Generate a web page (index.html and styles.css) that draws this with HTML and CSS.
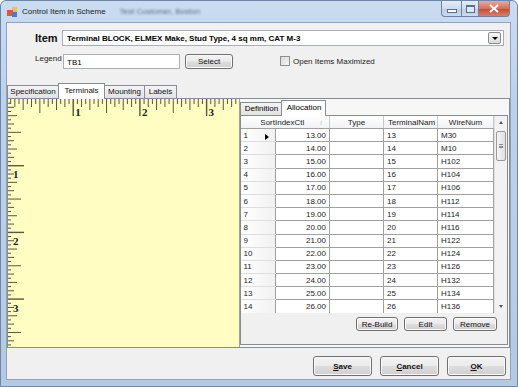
FILE: index.html
```html
<!DOCTYPE html>
<html lang="en">
<head>
  <meta charset="UTF-8" />
  <title>Control Item in Scheme</title>
  <link rel="stylesheet" href="styles.css">
</head>
<body>
  <div class="window">
    <div class="titlebar">
      <svg class="app-icon" width="11" height="11" viewBox="0 0 11 11">
        <rect x="5" y="0" width="5" height="5" fill="#f2c33a"/>
        <rect x="0" y="3" width="6" height="6" fill="#e2572c"/>
        <rect x="5" y="5" width="5" height="5" fill="#3f7fd0"/>
      </svg>
      <span class="title">Control Item in Scheme</span>
      <span class="title-blur">Test Customer, Boston</span>
      <div class="caption-btns">
        <div class="cap cap-min"><span class="dash"></span></div>
        <div class="cap cap-max"><span class="square"></span></div>
        <div class="cap cap-close">
          <svg width="10" height="9" viewBox="0 0 10 9">
            <path d="M1 1 L9 8 M9 1 L1 8" stroke="#fff" stroke-width="2"/>
          </svg>
        </div>
      </div>
    </div>

    <div class="client">
      <div class="item-row">
        <span class="item-label">Item</span>
        <div class="combo">
          <span class="combo-text">Terminal BLOCK, ELMEX Make, Stud Type, 4 sq mm, CAT M-3</span>
          <div class="combo-btn"><span class="arrow-down"></span></div>
        </div>
      </div>

      <div class="legend-row">
        <span class="legend-label">Legend</span>
        <div class="textbox">TB1</div>
        <button class="btn select-btn">Select</button>
        <label class="check"><span class="check-box"></span>Open Items Maximized</label>
      </div>

      <div class="tabs">
        <div class="tab tab-spec">Specification</div>
        <div class="tab tab-term active">Terminals</div>
        <div class="tab tab-mount">Mounting</div>
        <div class="tab tab-labels">Labels</div>
      </div>

      <div class="tab-page">
        <div class="ruler-area">
          <svg id="ruler" width="233" height="248"></svg>
        </div>
        <div class="side">
          <div class="subtabs">
            <div class="subtab sub-def">Definition</div>
            <div class="subtab sub-alloc active">Allocation</div>
          </div>
          <div class="sub-page">
            <div class="grid-wrap">
              <table class="grid">
                <colgroup>
                  <col class="c-head"><col class="c-sort"><col class="c-type"><col class="c-term"><col class="c-wire">
                </colgroup>
                <thead>
                  <tr>
                    <th colspan="2" class="h-sort">SortIndexCtl<span class="sort-mark">/</span></th>
                    <th>Type</th>
                    <th class="h-left">TerminalNam</th>
                    <th>WireNum</th>
                  </tr>
                </thead>
                <tbody id="grid-body"></tbody>
              </table>
              <div class="vscroll">
                <div class="sb-btn"><span class="sb-up"></span></div>
                <div class="sb-thumb"><span class="grip"></span></div>
                <div class="sb-track"></div>
                <div class="sb-btn"><span class="sb-down"></span></div>
              </div>
            </div>
            <div class="grid-actions">
              <button class="btn act-rebuild">Re-Build</button>
              <button class="btn act-edit">Edit</button>
              <button class="btn act-remove">Remove</button>
            </div>
          </div>
        </div>
      </div>

      <div class="footer">
        <button class="btn big-btn"><u>S</u>ave</button>
        <button class="btn big-btn"><u>C</u>ancel</button>
        <button class="btn big-btn"><u>O</u>K</button>
      </div>
    </div>
  </div>

  <script>
    const rows = [
      ['1', '13.00', '13', 'M30'],
      ['2', '14.00', '14', 'M10'],
      ['3', '15.00', '15', 'H102'],
      ['4', '16.00', '16', 'H104'],
      ['5', '17.00', '17', 'H106'],
      ['6', '18.00', '18', 'H112'],
      ['7', '19.00', '19', 'H114'],
      ['8', '20.00', '20', 'H116'],
      ['9', '21.00', '21', 'H122'],
      ['10', '22.00', '22', 'H124'],
      ['11', '23.00', '23', 'H126'],
      ['12', '24.00', '24', 'H132'],
      ['13', '25.00', '25', 'H134'],
      ['14', '26.00', '26', 'H136']
    ];

    const body = document.getElementById('grid-body');
    rows.forEach((r, i) => {
      const tr = document.createElement('tr');
      const marker = i === 0 ? '<span class="row-marker"></span>' : '';
      tr.innerHTML =
        '<td class="rowhead">' + r[0] + marker + '</td>' +
        '<td class="num">' + r[1] + '</td>' +
        '<td></td>' +
        '<td>' + r[2] + '</td>' +
        '<td>' + r[3] + '</td>';
      body.appendChild(tr);
    });

    // ruler: 16 ticks per inch, both edges
    const svg = document.getElementById('ruler');
    const NS = 'http://www.w3.org/2000/svg';
    const PPI = 66.7, X0 = -1.5, Y0 = 0;

    function line(x1, y1, x2, y2, w) {
      const l = document.createElementNS(NS, 'line');
      l.setAttribute('x1', x1); l.setAttribute('y1', y1);
      l.setAttribute('x2', x2); l.setAttribute('y2', y2);
      l.setAttribute('stroke', '#58583a');
      l.setAttribute('stroke-width', w);
      svg.appendChild(l);
    }
    function label(x, y, t) {
      const el = document.createElementNS(NS, 'text');
      el.setAttribute('x', x); el.setAttribute('y', y);
      el.setAttribute('class', 'ruler-num');
      el.textContent = t;
      svg.appendChild(el);
    }
    function len(i, lens) {
      if (i % 16 === 0) return lens[0];
      if (i % 8 === 0) return lens[1];
      if (i % 4 === 0) return lens[2];
      if (i % 2 === 0) return lens[3];
      return lens[4];
    }

    for (let i = 1; X0 + i * PPI / 16 < 233; i++) {
      const x = X0 + i * PPI / 16;
      line(x, 0, x, len(i, [17, 14, 11, 8, 5]), i % 16 === 0 ? 1.4 : 1);
      if (i % 16 === 0) label(x + 2, 17, i / 16);
    }
    for (let i = 1; Y0 + i * PPI / 16 < 248; i++) {
      const y = Y0 + i * PPI / 16;
      line(-1, y, len(i, [17, 14, 10, 7, 4]) - 1, y, i % 16 === 0 ? 1.4 : 1);
      if (i % 16 === 0) label(5, y + 12.5, i / 16);
    }
  </script>
</body>
</html>
```

FILE: styles.css
```css
body {
  margin: 0;
  font-family: "Liberation Sans", Arial, sans-serif;
  font-size: 8px;
  color: #000;
  background: #ffffff;
}
.window {
  width: 518px;
  height: 387px;
  box-sizing: border-box;
  display: flex;
  flex-direction: column;
  padding: 0 6px 6px 5px;
  background: linear-gradient(180deg, #cadcf0 0%, #bdd2ea 25%, #b4cae3 100%);
  border: 1px solid #6f87a6;
  border-radius: 6px 6px 0 0;
}
.titlebar {
  height: 21px;
  display: flex;
  align-items: center;
}
.app-icon {
  margin-left: 1px;
  margin-top: 1px;
}
.title {
  margin-left: 4px;
  font-size: 8px;
  color: #1a1a1a;
}
.title-blur {
  margin-left: 14px;
  font-size: 8px;
  color: #5b6c83;
  filter: blur(1.3px);
}
.caption-btns {
  margin-left: auto;
  margin-right: 1px;
  align-self: flex-start;
  display: flex;
}
.cap {
  height: 16px;
  box-sizing: border-box;
  border: 1px solid #6d83a1;
  border-top: none;
  display: flex;
  align-items: center;
  justify-content: center;
  background: linear-gradient(180deg, #e4edf7 0%, #cddcee 50%, #b9cde5 51%, #c9dbef 100%);
}
.cap-min {
  width: 20px;
  border-radius: 0 0 0 4px;
  border-right: none;
}
.cap-max {
  width: 18px;
}
.cap-close {
  width: 31px;
  border-left: none;
  border-radius: 0 0 4px 0;
  background: linear-gradient(180deg, #e9a99b 0%, #d66f5c 50%, #c64a32 51%, #d5806c 100%);
}
.dash {
  width: 8px;
  height: 2px;
  margin-top: 4px;
  background: #fff;
  border: 1px solid #5b6f89;
}
.square {
  width: 7px;
  height: 5px;
  border: 1px solid #5b6f89;
  border-top-width: 2px;
  background: #dfe8f3;
}

.client {
  flex: 1;
  background: #f0f0f0;
  border: 1px solid #8ea3bd;
  display: flex;
  flex-direction: column;
}
.item-row {
  display: flex;
  align-items: center;
  height: 16px;
  margin-top: 7px;
  padding-left: 28px;
  padding-right: 6px;
}
.item-label {
  width: 27px;
  font-size: 11px;
  font-weight: bold;
  color: #111;
}
.combo {
  flex: 1;
  height: 16px;
  box-sizing: border-box;
  border: 1px solid #a9aeb6;
  background: #ffffff;
  display: flex;
  align-items: center;
  padding-left: 4px;
}
.combo-text {
  flex: 1;
  font-weight: bold;
}
.combo-btn {
  width: 11px;
  height: 10px;
  margin-right: 2px;
  border: 1px solid #8b8b8b;
  border-radius: 2px;
  background: linear-gradient(#f7f7f7, #dcdcdc);
  display: flex;
  align-items: center;
  justify-content: center;
}
.arrow-down {
  width: 0;
  height: 0;
  border-left: 3px solid transparent;
  border-right: 3px solid transparent;
  border-top: 3px solid #000;
}

.legend-row {
  display: flex;
  align-items: center;
  height: 16px;
  margin-top: 7px;
  padding-left: 28px;
}
.legend-label {
  width: 28px;
  align-self: flex-start;
  margin-top: 1px;
  color: #222;
}
.textbox {
  width: 117px;
  height: 15px;
  box-sizing: border-box;
  border: 1px solid #abadb3;
  background: #ffffff;
  padding: 3px 0 0 3px;
}
.btn {
  font-family: "Liberation Sans", Arial, sans-serif;
  font-size: 8px;
  color: #111;
  padding: 0;
  box-sizing: border-box;
  border: 1px solid #707070;
  border-radius: 3px;
  background: linear-gradient(180deg, #f3f3f3 0%, #ebebeb 48%, #dddddd 52%, #cfcfcf 100%);
  box-shadow: inset 0 0 0 1px #fafafa;
}
.select-btn {
  width: 48px;
  height: 15px;
  margin-left: 5px;
}
.check {
  display: flex;
  align-items: center;
  margin-left: 47px;
  color: #222;
}
.check-box {
  width: 10px;
  height: 10px;
  box-sizing: border-box;
  margin-right: 3px;
  border: 1px solid #8e8f8f;
  background: linear-gradient(135deg, #d8d8d8, #f6f6f6);
}

.tabs {
  display: flex;
  align-items: flex-end;
  height: 15px;
  margin-top: 14px;
  position: relative;
  z-index: 1;
}
.tab {
  height: 13px;
  box-sizing: border-box;
  line-height: 12px;
  text-align: center;
  border: 1px solid #898c95;
  border-bottom: none;
  margin-right: -1px;
  background: linear-gradient(180deg, #f4f4f4, #e2e2e2);
  color: #111;
}
.tab.active {
  height: 16px;
  margin-bottom: -1px;
  line-height: 13px;
  background: #ffffff;
  position: relative;
}
.tab-spec { width: 52px; }
.tab-term { width: 47px; }
.tab-mount { width: 41px; }
.tab-labels { width: 33px; }

.tab-page {
  height: 250px;
  box-sizing: border-box;
  border: 1px solid #898c95;
  background: #ffffff;
  display: flex;
}
.ruler-area {
  width: 233px;
  background: #fffdc2;
  overflow: hidden;
}
#ruler {
  display: block;
  overflow: visible;
}
.ruler-num {
  font-family: "Liberation Serif", serif;
  font-size: 11px;
  font-weight: bold;
  fill: #1a1a1a;
}
.side {
  flex: 1;
  border-left: 1px solid #a0a0a0;
  background: #f7f7f7;
  padding-top: 1px;
  display: flex;
  flex-direction: column;
}
.subtabs {
  display: flex;
  align-items: flex-end;
  height: 15px;
  position: relative;
  z-index: 1;
}
.subtab {
  height: 13px;
  box-sizing: border-box;
  line-height: 12px;
  text-align: center;
  border: 1px solid #898c95;
  border-bottom: none;
  margin-right: -1px;
  background: linear-gradient(180deg, #f4f4f4, #e2e2e2);
}
.subtab.active {
  height: 16px;
  margin-bottom: -1px;
  line-height: 13px;
  background: #ffffff;
}
.sub-def { width: 42px; }
.sub-alloc { width: 45px; }

.sub-page {
  height: 230px;
  box-sizing: border-box;
  margin-right: 1px;
  border: 1px solid #898c95;
  background: #f0f0f0;
}
.grid-wrap {
  display: flex;
  height: 197px;
  overflow: hidden;
  background: #ffffff;
}
.grid {
  width: 252px;
  table-layout: fixed;
  border-collapse: collapse;
  align-self: flex-start;
}
.c-head { width: 34px; }
.c-sort { width: 54px; }
.c-type { width: 54px; }
.c-term { width: 54px; }
.c-wire { width: 56px; }
.grid th {
  height: 12px;
  padding: 0;
  font-weight: normal;
  text-align: center;
  color: #222;
  background: linear-gradient(180deg, #ffffff, #f1f2f4);
  border-right: 1px solid #c9c9c9;
  border-bottom: 1px solid #a0a0a0;
}
.grid th.h-sort {
  text-align: right;
  padding-right: 7px;
}
.grid th.h-left {
  text-align: left;
  padding-left: 4px;
}
.sort-mark {
  margin-left: 16px;
  font-size: 6px;
  color: #b0b0b0;
}
.grid td {
  height: 12.2px;
  padding: 0 3px;
  white-space: nowrap;
  border-right: 1px solid #a0a0a0;
  border-bottom: 1px solid #a0a0a0;
  color: #222;
}
.grid td.num {
  text-align: right;
}
.grid td.rowhead {
  padding-left: 2px;
  background: linear-gradient(90deg, #ffffff, #f1f1f1);
  border-bottom-color: #dedede;
  border-right-color: #a0a0a0;
}
.row-marker {
  float: right;
  margin-top: 3px;
  margin-right: 3px;
  width: 0;
  height: 0;
  border-top: 3px solid transparent;
  border-bottom: 3px solid transparent;
  border-left: 4px solid #000;
}
.vscroll {
  width: 12px;
  margin-left: auto;
  display: flex;
  flex-direction: column;
  background: #f2f2f2;
  border-left: 1px solid #e2e2e2;
}
.sb-btn {
  height: 13px;
  display: flex;
  align-items: center;
  justify-content: center;
}
.sb-up, .sb-down {
  width: 0;
  height: 0;
  border-left: 2px solid transparent;
  border-right: 2px solid transparent;
}
.sb-up { border-bottom: 3px solid #555; }
.sb-down { border-top: 3px solid #555; }
.sb-thumb {
  height: 30px;
  margin: 2px 1px 0 1px;
  box-sizing: border-box;
  border: 1px solid #9a9a9a;
  border-radius: 2px;
  background: linear-gradient(90deg, #f4f4f4, #e0e0e0);
  display: flex;
  align-items: center;
  justify-content: center;
}
.grip {
  width: 4px;
  height: 4px;
  border-top: 1px solid #888;
  border-bottom: 1px solid #888;
  box-sizing: border-box;
  background: linear-gradient(#888, #888) center / 4px 1px no-repeat;
}
.sb-track {
  flex: 1;
}
.grid-actions {
  display: flex;
  justify-content: flex-end;
  gap: 6px;
  margin-top: 4px;
  padding-right: 10px;
}
.grid-actions .btn {
  height: 14px;
}
.act-rebuild { width: 42px; }
.act-edit { width: 43px; }
.act-remove { width: 44px; }

.footer {
  display: flex;
  justify-content: flex-end;
  gap: 8px;
  margin-top: 8px;
  padding-right: 4px;
}
.big-btn {
  width: 59px;
  height: 20px;
  font-weight: bold;
}
```
